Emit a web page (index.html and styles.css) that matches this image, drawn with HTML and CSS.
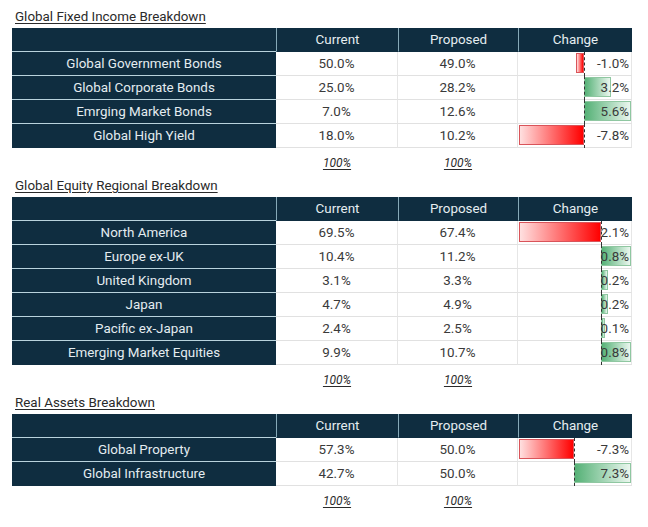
FILE: index.html
```html
<!DOCTYPE html>
<html>
<head>
<meta charset="utf-8">
<link rel="stylesheet" href="styles.css">
</head>
<body>
<div class="page">

  <section class="block">
    <h2 class="title">Global Fixed Income Breakdown</h2>
    <div class="grid" style="--axis:66px">
      <div class="hd blank"></div><div class="hd">Current</div><div class="hd">Proposed</div><div class="hd">Change</div>

      <div class="lbl">Global Government Bonds</div><div class="num">50.0%</div><div class="num">49.0%</div>
      <div class="chg"><span class="axis"></span><span class="bar neg" style="left:58px;width:8px"></span><span class="val">-1.0%</span></div>

      <div class="lbl">Global Corporate Bonds</div><div class="num">25.0%</div><div class="num">28.2%</div>
      <div class="chg"><span class="axis"></span><span class="bar pos" style="left:66px;width:27px"></span><span class="val">3.2%</span></div>

      <div class="lbl">Emrging Market Bonds</div><div class="num">7.0%</div><div class="num">12.6%</div>
      <div class="chg"><span class="axis"></span><span class="bar pos" style="left:66px;width:47px"></span><span class="val">5.6%</span></div>

      <div class="lbl last">Global High Yield</div><div class="num">18.0%</div><div class="num">10.2%</div>
      <div class="chg"><span class="axis"></span><span class="bar neg" style="left:1px;width:65px"></span><span class="val">-7.8%</span></div>
    </div>
    <div class="totals"><span></span><span class="tot">100%</span><span class="tot">100%</span><span></span></div>
  </section>

  <section class="block">
    <h2 class="title">Global Equity Regional Breakdown</h2>
    <div class="grid" style="--axis:83px">
      <div class="hd blank"></div><div class="hd">Current</div><div class="hd">Proposed</div><div class="hd">Change</div>

      <div class="lbl">North America</div><div class="num">69.5%</div><div class="num">67.4%</div>
      <div class="chg"><span class="axis"></span><span class="bar neg" style="left:1px;width:82px"></span><span class="val">2.1%</span></div>

      <div class="lbl">Europe ex-UK</div><div class="num">10.4%</div><div class="num">11.2%</div>
      <div class="chg"><span class="axis"></span><span class="bar pos" style="left:83px;width:30px"></span><span class="val">0.8%</span></div>

      <div class="lbl">United Kingdom</div><div class="num">3.1%</div><div class="num">3.3%</div>
      <div class="chg"><span class="axis"></span><span class="bar pos" style="left:83px;width:7px"></span><span class="val">0.2%</span></div>

      <div class="lbl">Japan</div><div class="num">4.7%</div><div class="num">4.9%</div>
      <div class="chg"><span class="axis"></span><span class="bar pos" style="left:83px;width:7px"></span><span class="val">0.2%</span></div>

      <div class="lbl">Pacific ex-Japan</div><div class="num">2.4%</div><div class="num">2.5%</div>
      <div class="chg"><span class="axis"></span><span class="bar pos" style="left:83px;width:4px"></span><span class="val">0.1%</span></div>

      <div class="lbl last">Emerging Market Equities</div><div class="num">9.9%</div><div class="num">10.7%</div>
      <div class="chg"><span class="axis"></span><span class="bar pos" style="left:83px;width:30px"></span><span class="val">0.8%</span></div>
    </div>
    <div class="totals"><span></span><span class="tot">100%</span><span class="tot">100%</span><span></span></div>
  </section>

  <section class="block">
    <h2 class="title">Real Assets Breakdown</h2>
    <div class="grid" style="--axis:56px">
      <div class="hd blank"></div><div class="hd">Current</div><div class="hd">Proposed</div><div class="hd">Change</div>

      <div class="lbl">Global Property</div><div class="num">57.3%</div><div class="num">50.0%</div>
      <div class="chg"><span class="axis"></span><span class="bar neg" style="left:1px;width:55px"></span><span class="val">-7.3%</span></div>

      <div class="lbl last">Global Infrastructure</div><div class="num">42.7%</div><div class="num">50.0%</div>
      <div class="chg"><span class="axis"></span><span class="bar pos" style="left:56px;width:57px"></span><span class="val">7.3%</span></div>
    </div>
    <div class="totals"><span></span><span class="tot">100%</span><span class="tot">100%</span><span></span></div>
  </section>

</div>
</body>
</html>
```

FILE: styles.css
```css
* { box-sizing: border-box; }

html, body {
  margin: 0;
  padding: 0;
  background: #ffffff;
}

body {
  font-family: Roboto, "Liberation Sans", Arial, sans-serif;
  font-size: 13.4px;
  color: #333333;
}

.page {
  padding: 3px 0 0 12px;
  width: 648px;
}

.block {
  display: flex;
  flex-direction: column;
}

.title {
  margin: 0;
  height: 25px;
  padding: 5px 0 0 3px;
  font-size: 13.4px;
  line-height: 18px;
  font-weight: 400;
  color: #2a2a2a;
  text-decoration: underline;
  text-underline-offset: 2px;
}

.grid {
  display: grid;
  grid-template-columns: 264px 122px 120px 114px;
  width: 620px;
}

.hd {
  height: 24px;
  line-height: 24px;
  background: #0f2d40;
  color: #e6edf1;
  text-align: center;
  border-bottom: 1px solid #0f2d40;
  border-left: 1px solid #86a9b8;
}

.hd.blank {
  border-left: none;
  border-bottom-color: #b9d3dd;
}

.lbl {
  height: 24px;
  line-height: 24px;
  background: #0f2d40;
  color: #e4ecf0;
  text-align: center;
  border-bottom: 1px solid #b9d3dd;
}

.lbl.last {
  border-bottom-color: #0f2d40;
}

.num {
  height: 24px;
  line-height: 24px;
  text-align: center;
  color: #3a3a3a;
  border-bottom: 1px solid #e1e1e1;
  border-right: 1px solid #e6e6e6;
}

.chg {
  position: relative;
  height: 24px;
  line-height: 24px;
  text-align: right;
  padding-right: 2px;
  color: #3a3a3a;
  border-bottom: 1px solid #e1e1e1;
  border-right: 1px solid #e6e6e6;
}

.axis {
  position: absolute;
  top: 0;
  bottom: -1px;
  left: var(--axis);
  border-left: 1px dashed #333333;
  z-index: 2;
}

.bar {
  position: absolute;
  top: 1px;
  bottom: 2px;
  z-index: 1;
}

.bar.neg {
  background: linear-gradient(to right, #ffe0e0, #ff0000);
  border: 1px solid #d9545a;
}

.bar.pos {
  background: linear-gradient(to right, #55b176, #eaf6ee);
  border: 1px solid #8fc7a1;
}

.val {
  position: relative;
  z-index: 3;
}

.totals {
  display: grid;
  grid-template-columns: 264px 122px 120px 114px;
  width: 620px;
  height: 24px;
  padding-top: 6px;
  line-height: 18px;
}

.tot {
  text-align: center;
  font-style: italic;
  font-size: 12px;
  color: #2a2a2a;
  text-decoration: underline;
  text-underline-offset: 2px;
}
```
